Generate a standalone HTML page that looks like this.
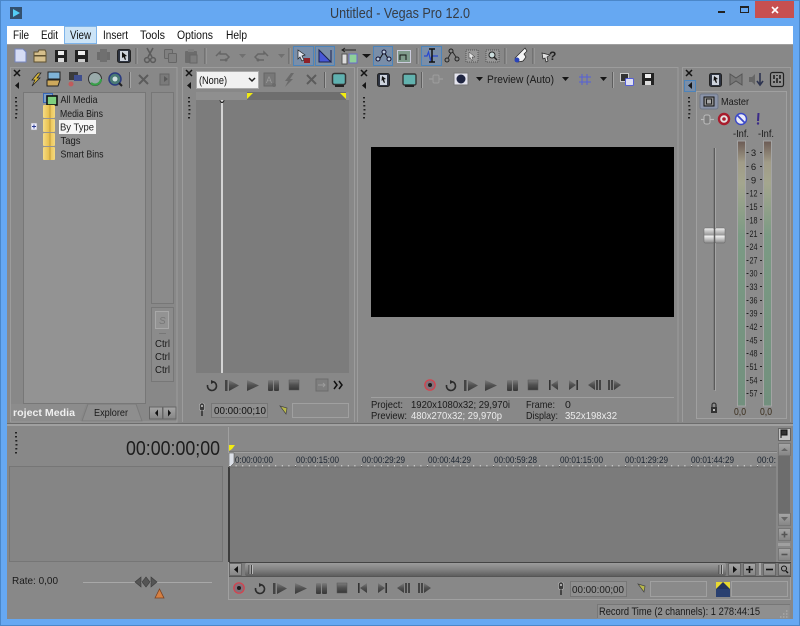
<!DOCTYPE html>
<html><head><meta charset="utf-8"><title>Untitled - Vegas Pro 12.0</title>
<style>
html,body{margin:0;padding:0;background:#66a8f2;width:800px;height:626px;overflow:hidden}
svg{display:block}
text{font-family:"Liberation Sans",sans-serif;font-size:10.5px;fill:#1a1a1a}
.m{font-size:11.5px;fill:#111}
.w{fill:#ececec}
.r{font-size:9.5px;fill:#1b2430}
.s{font-size:9.5px;fill:#1c1c1c;text-anchor:middle}
</style></head><body>
<svg width="800" height="626" viewBox="0 0 800 626" xmlns="http://www.w3.org/2000/svg">
<defs>
<linearGradient id="tb" x1="0" y1="0" x2="0" y2="1"><stop offset="0" stop-color="#7c7c7c"/><stop offset=".5" stop-color="#505050"/><stop offset="1" stop-color="#383838"/></linearGradient>
<linearGradient id="sb" x1="0" y1="0" x2="0" y2="1"><stop offset="0" stop-color="#9c9c9c"/><stop offset=".5" stop-color="#828282"/><stop offset="1" stop-color="#5e5e5e"/></linearGradient>
<linearGradient id="btn" x1="0" y1="0" x2="0" y2="1"><stop offset="0" stop-color="#a6a6a6"/><stop offset="1" stop-color="#858585"/></linearGradient>
<linearGradient id="meter" x1="0" y1="0" x2="0" y2="1"><stop offset="0" stop-color="#6b5a54"/><stop offset=".08" stop-color="#a19c88"/><stop offset=".16" stop-color="#a4a68e"/><stop offset=".36" stop-color="#7b9a84"/><stop offset="1" stop-color="#72907e"/></linearGradient>
<linearGradient id="fold" x1="0" y1="0" x2="1" y2="0"><stop offset="0" stop-color="#f6dc84"/><stop offset=".5" stop-color="#e9c04e"/><stop offset="1" stop-color="#f4d97e"/></linearGradient>
<linearGradient id="fad" x1="0" y1="0" x2="0" y2="1"><stop offset="0" stop-color="#f0f0f0"/><stop offset=".45" stop-color="#9a9a9a"/><stop offset=".55" stop-color="#eee"/><stop offset="1" stop-color="#888"/></linearGradient>
<g id="folder"><rect x="0" y="0" width="12" height="13" rx="1" fill="url(#fold)"/><path d="M7 0v13" stroke="#bf9a3c" stroke-width="1"/></g>
<g id="loop"><path d="M6 1.500A4.500 4.500 0 1 1 1.600 5" fill="none" stroke="#2c2c2c" stroke-width="1.600"/><path d="M5 0l4 2-4 2z" fill="#2c2c2c"/></g>
<g id="pfrom"><rect x="0" y="0" width="2.500" height="11" fill="#444"/><path d="M4 0l10 5.500L4 11z" fill="url(#tb)"/></g>
<g id="play"><path d="M0 0l12 5.500L0 11z" fill="url(#tb)"/></g>
<g id="pause"><rect x="0" y="0" width="5" height="11" rx="1" fill="url(#tb)"/><rect x="6" y="0" width="5" height="11" rx="1" fill="url(#tb)"/></g>
<g id="stop"><rect x="0" y="0" width="10" height="10" fill="url(#tb)" stroke="#555" stroke-width=".5"/></g>
<g id="prev"><rect x="0" y="0" width="1.600" height="10" fill="#333"/><path d="M9 0L2 5l7 5z" fill="url(#tb)"/></g>
<g id="next"><path d="M0 0l7 5-7 5z" fill="url(#tb)"/><rect x="7.400" y="0" width="1.600" height="10" fill="#333"/></g>
<g id="frb"><path d="M7 0L0 5l7 5z" fill="url(#tb)"/><rect x="8" y="0" width="2" height="10" fill="#444"/><rect x="11" y="0" width="2" height="10" fill="#444"/></g>
<g id="frf"><rect x="0" y="0" width="2" height="10" fill="#444"/><rect x="3" y="0" width="2" height="10" fill="#444"/><path d="M6 0l7 5-7 5z" fill="url(#tb)"/></g>
<g id="rec"><circle cx="6" cy="6" r="5.200" fill="#85707a" stroke="#d8404c" stroke-width="1.200"/><circle cx="6" cy="6" r="2" fill="#1c1c1c"/></g>
<g id="mic"><rect x="-2.500" y="0" width="5" height="8" rx="2.500" fill="#3c3c3c" stroke="#bbb" stroke-width=".6"/><circle cx="0" cy="3" r="1" fill="#ccc"/><path d="M0 8v5" stroke="#333" stroke-width="1.600"/></g>
<g id="grip"><path d="M1 0v1.500M1 4v1.500M1.300 8v1.500M1.500 12v1.500M1.300 16v1.500M1 20v1.500" stroke="#222" stroke-width="2"/></g>
<g id="xa"><path d="M-3 -3l6 6M3 -3l-6 6" stroke="#151515" stroke-width="1.500"/></g>
<g id="sep"><rect x="0" y="0" width="1" height="16" fill="#5e5e5e"/><rect x="1" y="0" width="1" height="16" fill="#a4a4a4"/></g>
</defs>

<!-- window frame -->
<rect x="0.500" y="0.500" width="799" height="625" fill="#66a8f2" stroke="#4b87c9"/>
<path d="M10 7h12v12H10z" fill="#33506e"/><path d="M13 9l7 4-7 4z" fill="#54cdf5"/>
<text x="400" y="18" text-anchor="middle" style="font-size:14.500px;fill:#373d44" textLength="140" lengthAdjust="spacingAndGlyphs">Untitled - Vegas Pro 12.0</text>
<rect x="755" y="1" width="39" height="17" fill="#c75050"/>
<rect x="718" y="11" width="7" height="2" fill="#222"/>
<rect x="740.500" y="7.500" width="8" height="5" fill="none" stroke="#222"/><rect x="740" y="6" width="9" height="2" fill="#222"/>
<path d="M772 7l6 6M778 7l-6 6" stroke="#fff" stroke-width="1.600"/>

<!-- client -->
<rect x="7" y="26" width="786" height="593" fill="#888"/>
<rect x="7" y="26" width="786" height="18" fill="#fff"/>
<rect x="64.500" y="26.500" width="32" height="17" fill="#cce4f7" stroke="#7eb4ea"/>
<text class="m" x="13" y="39" textLength="16" lengthAdjust="spacingAndGlyphs">File</text>
<text class="m" x="41" y="39" textLength="17" lengthAdjust="spacingAndGlyphs">Edit</text>
<text class="m" x="70" y="39" textLength="21" lengthAdjust="spacingAndGlyphs">View</text>
<text class="m" x="103" y="39" textLength="25" lengthAdjust="spacingAndGlyphs">Insert</text>
<text class="m" x="140" y="39" textLength="25" lengthAdjust="spacingAndGlyphs">Tools</text>
<text class="m" x="177" y="39" textLength="36" lengthAdjust="spacingAndGlyphs">Options</text>
<text class="m" x="226" y="39" textLength="21" lengthAdjust="spacingAndGlyphs">Help</text>
<rect x="7" y="44" width="786" height="1" fill="#a0a0a0"/>

<!-- main toolbar -->
<g>
<path d="M15 49h8l3 3v10H15z" fill="#d5dcf4" stroke="#7686c0"/>
<path d="M34 52h4l1-2h6l1 2v10H34z" fill="#d6bf8c" stroke="#5e5030"/><rect x="34" y="55" width="12" height="1.500" fill="#5e5030"/>
<path d="M55 50h12v12H55z" fill="#222"/><rect x="58" y="51" width="6" height="4" fill="#eee"/><rect x="58" y="58" width="6" height="4" fill="#ddd"/>
<path d="M75 50h13v12H75z" fill="#222"/><rect x="78" y="51" width="7" height="4" fill="#eee"/><rect x="78" y="59" width="7" height="3" fill="#ccc"/>
<path d="M97 52h13v8H97z" fill="#6c6c6c"/><path d="M100 49h7v13h-7z" fill="#707070"/>
<rect x="117.500" y="49.500" width="13" height="13" rx="2" fill="#2d3340" stroke="#222"/><rect x="120" y="51" width="8" height="10" fill="#cdd3dd"/><path d="M122 52l5 4-2 .5 1 3-1 .5-1.500-3-1.500 1z" fill="#111"/>
<use href="#sep" x="135.500" y="48"/>
<path d="M147 48l5 9M153 48l-5 9" stroke="#5c5c5c" stroke-width="1.600"/><circle cx="147" cy="60" r="2.400" fill="none" stroke="#5c5c5c" stroke-width="1.500"/><circle cx="153" cy="60" r="2.400" fill="none" stroke="#5c5c5c" stroke-width="1.500"/>
<rect x="164.500" y="49.500" width="8" height="9" rx="1" fill="#808080" stroke="#666"/><rect x="168.500" y="53.500" width="8" height="9" rx="1" fill="#808080" stroke="#666"/>
<rect x="185" y="51" width="12" height="12" rx="1" fill="#6c6c6c"/><rect x="188" y="49" width="6" height="3" fill="#808080"/><rect x="190" y="55" width="7" height="8" fill="#7d7d7d" stroke="#666"/>
<use href="#sep" x="204.500" y="48"/>
<path d="M216 56l4-4v2h6l3 3-3 3h-6" fill="none" stroke="#666" stroke-width="1.500"/><circle cx="226" cy="60" r="1.500" fill="#666"/>
<path d="M239 54h7l-3.500 4z" fill="#707070"/>
<path d="M268 56l-4-4v2h-6l-3 3 3 3h6" fill="none" stroke="#666" stroke-width="1.500"/><circle cx="258" cy="60" r="1.500" fill="#666"/>
<path d="M278 54h7l-3.500 4z" fill="#707070"/>
<use href="#sep" x="288.500" y="48"/>
<rect x="293.500" y="46.500" width="20" height="19" fill="#7a8ea8" stroke="#4c84bb"/>
<rect x="315.500" y="46.500" width="19" height="19" fill="#7a8ea8" stroke="#4c84bb"/>
<path d="M298 50l7 5-3 1 2 4-2 1-2-4-2 2z" fill="#dfe4ef" stroke="#222" stroke-width=".7"/><rect x="304" y="58" width="6" height="5" fill="#8e2028"/>
<path d="M319 62V50l12 12zM331 50v12" fill="#4858d8" stroke="#1a2350" stroke-width="1"/>
<rect x="342" y="54" width="5" height="10" fill="#ddd" stroke="#555"/><rect x="349" y="54" width="8" height="9" fill="#8ed09a" stroke="#6a6ac8"/><path d="M342 50h14M345 48l-3 2 3 2" stroke="#222" fill="none"/>
<path d="M362 54h9l-4.500 4z" fill="#151515"/>
<rect x="373.500" y="46.500" width="19" height="19" fill="#7a8ea8" stroke="#4c84bb"/>
<path d="M379 60l5-8 5 8" fill="none" stroke="#111" stroke-width="1"/><circle cx="384" cy="52" r="2" fill="#bcd" stroke="#113"/><circle cx="378" cy="59" r="2" fill="#bcd" stroke="#113"/><circle cx="389" cy="59" r="2" fill="#bcd" stroke="#113"/>
<rect x="397.500" y="50.500" width="13" height="12" fill="#7f9a8b" stroke="#ccd"/><path d="M400 60v-5h6v5" stroke="#111" fill="none"/>
<use href="#sep" x="416.500" y="48"/>
<rect x="421.500" y="46.500" width="20" height="19" fill="#7a8ea8" stroke="#4c84bb"/>
<path d="M424 56h3l1.500-4 2 8 1.500-4h6" stroke="#2848d0" fill="none" stroke-width="1.200"/><path d="M429 49h6M429 62h6M432 49v13" stroke="#111" stroke-width="1.500"/>
<path d="M447 60l5-9 6 9" fill="none" stroke="#2a2a2a"/><circle cx="447" cy="60" r="2" fill="#888" stroke="#222"/><circle cx="451" cy="51" r="2" fill="#888" stroke="#222"/><circle cx="457" cy="59" r="2" fill="#888" stroke="#222"/>
<rect x="466" y="50" width="12" height="12" fill="#999" stroke="#555" stroke-dasharray="1 1"/><path d="M469 52l6 5-3 0 1 3-1 .5-2-3-1 1z" fill="#e4e4e4" stroke="#333" stroke-width=".5"/>
<rect x="486" y="50" width="13" height="12" fill="#999" stroke="#555" stroke-dasharray="1 1"/><circle cx="492" cy="55" r="3" fill="#cdd" stroke="#222"/><path d="M494 57l3 3" stroke="#222" stroke-width="1.500"/>
<use href="#sep" x="504.500" y="48"/>
<path d="M518 62l-3-4 4-4 6-6 2 3-3 3 2 3-3 4z" fill="#f4f4f4" stroke="#222" stroke-width=".7"/><circle cx="517" cy="60" r="2.500" fill="#2a44b8"/>
<use href="#sep" x="532.500" y="48"/>
<path d="M542 53l8 2-3 2 1 4-2 1-1-4-2 1z" fill="#e0e0e0" stroke="#222" stroke-width=".7"/>
<text x="549" y="60" style="font-size:12px;font-weight:bold;fill:#222">?</text>
</g>

<!-- panel frames -->
<path d="M10.500 422V67.500H177V422H10.500M182.500 422V67.500H354.500V422M357.500 422V67.500H678V422M682.500 422V67.500H790.500V422" fill="none" stroke="#9c9c9c"/>
<rect x="7" y="423" width="786" height="1" fill="#6c6c6c"/><rect x="7" y="424" width="786" height="2" fill="#a0a0a0"/>

<!-- panel 1 -->
<use href="#xa" x="17" y="73"/><path d="M19 82v7l-4-3.500z" fill="#151515"/><use href="#grip" x="15" y="97"/>
<path d="M38 73l-6 7h3l-3 6 8-8h-3l4-5z" fill="#d8b83c" stroke="#222" stroke-width=".7"/>
<rect x="48" y="72" width="12" height="7" fill="#7fb3d8" stroke="#222"/><path d="M47 80h13l-2 6H47z" fill="#cda95c" stroke="#222"/>
<rect x="69" y="72" width="9" height="8" fill="#3b3b3b"/><rect x="74" y="75" width="8" height="6" fill="#3f4e8e"/><circle cx="71" cy="84" r="2.500" fill="#c05c5c"/>
<circle cx="95" cy="79" r="6.500" fill="#9aa" stroke="#333"/><path d="M91 83a6 6 0 0 0 10-4" fill="none" stroke="#3aa04a" stroke-width="2.200"/>
<circle cx="115" cy="79" r="6" fill="#4a7a74" stroke="#2a3a80" stroke-width="1.500"/><circle cx="115" cy="79" r="2.500" fill="#cfe0e0"/><path d="M119 83l3 3" stroke="#222" stroke-width="2"/>
<use href="#sep" x="129" y="72"/>
<path d="M139 75l9 9M148 75l-9 9" stroke="#5c5c5c" stroke-width="2"/>
<rect x="160" y="74" width="9" height="11" fill="#7a7a7a" stroke="#666"/><path d="M164 76l4 3-4 3z" fill="#5a5a5a"/>

<rect x="23.500" y="92.500" width="122" height="311" fill="#939393" stroke="#777"/>
<rect x="151.500" y="92.500" width="22" height="211" fill="#8b8b8b" stroke="#777"/>
<rect x="151.500" y="307.500" width="22" height="74" fill="#8b8b8b" stroke="#777"/><rect x="155.500" y="311.500" width="13" height="17" fill="#939393" stroke="#a8a8a8"/>
<text x="159" y="324" style="font-size:10px;font-style:italic;fill:#777">S</text>
<rect x="159" y="333" width="7" height="1" fill="#777"/>
<text x="155" y="347" textLength="15" lengthAdjust="spacingAndGlyphs">Ctrl</text><text x="155" y="360" textLength="15" lengthAdjust="spacingAndGlyphs">Ctrl</text><text x="155" y="373" textLength="15" lengthAdjust="spacingAndGlyphs">Ctrl</text>
<rect x="43.500" y="93.500" width="9" height="9" fill="#7da0c8" stroke="#3a68b8"/><rect x="47" y="96" width="10" height="9" fill="#7fd07f" stroke="#111" stroke-width="1.600"/>
<use href="#folder" x="43" y="105"/><use href="#folder" x="43" y="119"/><use href="#folder" x="43" y="133"/><use href="#folder" x="43" y="147"/>
<rect x="59" y="120" width="37" height="14" fill="#f6f6f6"/>
<text x="60.500" y="103" textLength="37" lengthAdjust="spacingAndGlyphs">All Media</text>
<text x="60" y="117" textLength="43" lengthAdjust="spacingAndGlyphs">Media Bins</text>
<text x="60" y="130.500" textLength="34" lengthAdjust="spacingAndGlyphs">By Type</text>
<text x="60.500" y="144" textLength="20" lengthAdjust="spacingAndGlyphs">Tags</text>
<text x="60.500" y="157.500" textLength="43" lengthAdjust="spacingAndGlyphs">Smart Bins</text>
<rect x="31" y="123" width="6" height="7" fill="#eef" stroke="#999" stroke-width=".6"/><path d="M32 126.500h4M34 124.500v4" stroke="#2a3a90"/>
<!-- tabs -->
<path d="M11 404h75l-6 17H11z" fill="#8c8c8c"/>
<text x="13" y="416" style="font-weight:bold;fill:#efefef" textLength="62" lengthAdjust="spacingAndGlyphs">roject Media</text>
<path d="M82 421l6-17h48l6 17z" fill="#8e8e8e" stroke="#7a7a7a"/>
<text x="94" y="416" textLength="34" lengthAdjust="spacingAndGlyphs">Explorer</text>
<rect x="149.500" y="407" width="13" height="12" fill="url(#btn)" stroke="#666"/><rect x="163" y="407" width="13" height="12" fill="url(#btn)" stroke="#666"/>
<path d="M158 409.500v7l-3-3.500zM168 409.500v7l3-3.500z" fill="#111"/>

<!-- panel 2 trimmer -->
<use href="#xa" x="189" y="73"/><path d="M191 82v7l-4-3.500z" fill="#151515"/><use href="#grip" x="188" y="97"/>
<rect x="196.500" y="71.500" width="62" height="17" fill="#f1f1f1" stroke="#aaa"/>
<text x="199" y="84" style="font-size:11px;fill:#111" textLength="28" lengthAdjust="spacingAndGlyphs">(None)</text>
<path d="M249 78l3 3 3-3" fill="none" stroke="#222" stroke-width="1.500"/>
<rect x="264" y="73" width="11" height="13" fill="#777" stroke="#666"/><text x="266" y="83" style="font-size:9px;fill:#999">A</text><circle cx="274" cy="85" r="2" fill="#6b6b6b"/>
<path d="M291 73l-6 8h3l-3 6 8-8h-3l4-6z" fill="#6a6a6a"/>
<path d="M307 75l9 9M316 75l-9 9" stroke="#5c5c5c" stroke-width="2"/>
<use href="#sep" x="324" y="72"/>
<rect x="332.500" y="73.500" width="13" height="11" rx="2" fill="#5fb1b0" stroke="#333" stroke-width="1.500"/><rect x="335" y="85" width="9" height="2" fill="#222"/>
<rect x="196" y="92" width="153" height="8" fill="#8f8f8f"/><rect x="247" y="92" width="99" height="8" fill="#6e6e6e"/>
<path d="M247 93h6l-3 3-3 3z" fill="#f2ec10"/><path d="M340 93h6v6l-3-3z" fill="#f2ec10"/>
<rect x="196" y="100" width="153" height="273" fill="#7c7c7c"/>
<rect x="221" y="100" width="2" height="273" fill="#d4d4d4"/><path d="M219 100l3 2 3-2-2 3h-2z" fill="#222"/>
<use href="#loop" x="206" y="380"/><use href="#pfrom" x="225" y="380"/><use href="#play" x="247" y="380"/><use href="#pause" x="268" y="380"/><use href="#stop" x="289" y="380"/>
<rect x="316" y="379" width="12" height="12" fill="#7e7e7e" stroke="#6c6c6c"/><path d="M318 385h7M323 383l2 2-2 2" stroke="#9c9c9c" fill="none"/>
<path d="M334 381l3 4-3 4M339 381l3 4-3 4" fill="none" stroke="#111" stroke-width="1.500"/>
<use href="#mic" x="202" y="403"/>
<rect x="211.500" y="403.500" width="56" height="14" fill="#8f8f8f" stroke="#777"/>
<text x="214" y="414" textLength="52" lengthAdjust="spacingAndGlyphs" style="fill:#111">00:00:00;10</text>
<path d="M280 406l7 2-1 6z" fill="#b9b94a" stroke="#444" stroke-width=".7"/>
<rect x="292.500" y="403.500" width="56" height="14" fill="#8a8a8a" stroke="#a0a0a0"/>

<!-- panel 3 preview -->
<use href="#xa" x="364" y="73"/><path d="M366 82v7l-4-3.500z" fill="#151515"/><use href="#grip" x="363" y="97"/>
<rect x="377.500" y="73.500" width="12" height="13" rx="2" fill="#2d3340" stroke="#222"/><rect x="380" y="75" width="7" height="10" fill="#cdd3dd"/><path d="M382 76l4 3-2 .5 1 3-1 .5-1.500-3-1 1z" fill="#111"/>
<rect x="403" y="74" width="13" height="11" rx="1.500" fill="#62b2ae" stroke="#333" stroke-width="1.400"/><rect x="405" y="85" width="9" height="2" fill="#222"/>
<use href="#sep" x="421" y="72"/>
<path d="M429 79h14" stroke="#9a9a9a" stroke-width="1.500"/><rect x="433" y="75" width="6" height="8" rx="1.500" fill="#8a8a8a" stroke="#9d9d9d"/>
<rect x="454" y="73" width="14" height="12" fill="#e4e4ee" stroke="#777"/><circle cx="461" cy="79" r="4.500" fill="#1e2440"/>
<path d="M476 77h7l-3.500 4z" fill="#151515"/>
<text x="487" y="83" style="font-size:11px" textLength="67" lengthAdjust="spacingAndGlyphs">Preview (Auto)</text>
<path d="M562 77h7l-3.500 4z" fill="#151515"/>
<path d="M582 74v11M587 74v11M579 77h12M579 82h12" stroke="#5560d8" stroke-width="1"/>
<path d="M600 77h7l-3.500 4z" fill="#151515"/>
<use href="#sep" x="612" y="72"/>
<rect x="620.500" y="73.500" width="8" height="8" fill="#333" stroke="#ccc"/><rect x="625.500" y="78.500" width="8" height="7" rx="1" fill="#dfe0f4" stroke="#5560d8"/>
<rect x="642" y="73" width="12" height="12" fill="#222"/><rect x="645" y="74" width="6" height="4" fill="#eee"/><rect x="645" y="81" width="6" height="4" fill="#ddd"/>
<rect x="371" y="147" width="303" height="170" fill="#000"/>
<use href="#rec" x="424" y="379"/><use href="#loop" x="445" y="380"/><use href="#pfrom" x="464" y="380"/><use href="#play" x="485" y="380"/><use href="#pause" x="507" y="380"/><use href="#stop" x="528" y="380"/><use href="#prev" x="549" y="380"/><use href="#next" x="569" y="380"/><use href="#frb" x="588" y="380"/><use href="#frf" x="608" y="380"/>
<rect x="371" y="397" width="303" height="1" fill="#a0a0a0"/>
<text x="371" y="408" textLength="32" lengthAdjust="spacingAndGlyphs">Project:</text>
<text x="411" y="408" textLength="99" lengthAdjust="spacingAndGlyphs">1920x1080x32; 29,970i</text>
<text x="526" y="408" textLength="29" lengthAdjust="spacingAndGlyphs">Frame:</text>
<text x="565" y="408">0</text>
<text x="371" y="419" textLength="36" lengthAdjust="spacingAndGlyphs">Preview:</text>
<text class="w" x="411" y="419" textLength="91" lengthAdjust="spacingAndGlyphs">480x270x32; 29,970p</text>
<text x="526" y="419" textLength="32" lengthAdjust="spacingAndGlyphs">Display:</text>
<text class="w" x="565" y="419" textLength="52" lengthAdjust="spacingAndGlyphs">352x198x32</text>

<!-- panel 4 mixer -->
<use href="#xa" x="689" y="73"/><rect x="684.500" y="80.500" width="11" height="11" fill="#7a8ea8" stroke="#4c84bb"/><path d="M692 82v7l-4-3.500z" fill="#151515"/><use href="#grip" x="688" y="97"/>
<rect x="709.500" y="73.500" width="12" height="13" rx="2" fill="#2d3340" stroke="#222"/><rect x="712" y="75" width="7" height="10" fill="#cdd3dd"/><path d="M714 76l4 3-2 .5 1 3-1 .5-1.500-3-1 1z" fill="#111"/>
<path d="M730 74l6 4 6-4v11l-6-4-6 4z" fill="#777" stroke="#555"/>
<path d="M749 77h3l3-3v11l-3-3h-3z" fill="#666"/><path d="M760 73v11M757 81l3 4 3-4" stroke="#2d3450" stroke-width="1.600" fill="none"/>
<rect x="770.500" y="72.500" width="13" height="14" rx="2" fill="#8f8f8f" stroke="#222" stroke-width="1.200"/><path d="M774 75v8M777 75v8M780 75v8" stroke="#111" stroke-width="1.400"/><path d="M773 80h2M776 77h2M779 80h2" stroke="#eee"/>
<rect x="696.500" y="91.500" width="90" height="327" fill="#8c8c8c" stroke="#a0a0a0"/>
<rect x="700" y="94" width="18" height="15" rx="2" fill="#8a93a8" stroke="#6f7788"/><rect x="704" y="97" width="10" height="9" fill="#8f8f8f" stroke="#111"/><rect x="706.500" y="99" width="5" height="5" fill="#a8a8a8" stroke="#222"/>
<text x="721" y="105" textLength="28" lengthAdjust="spacingAndGlyphs">Master</text>
<path d="M701 119.500h13" stroke="#bbb" stroke-width="1.200"/><rect x="704" y="115" width="6" height="9" rx="2" fill="#7f7f7f" stroke="#bbb"/>
<circle cx="724" cy="119" r="5" fill="#e4e4e4" stroke="#a81c2c" stroke-width="2.400"/><circle cx="724" cy="119" r="1.800" fill="#a81c2c"/>
<circle cx="741" cy="119" r="5.500" fill="#ececf8" stroke="#3a48c8" stroke-width="1.400"/><path d="M737 115l8 8" stroke="#3a48c8" stroke-width="1.800"/>
<path d="M758.500 113l-.5 8" stroke="#3a2a88" stroke-width="2"/><circle cx="758" cy="123.500" r="1.200" fill="#3a2a88"/>
<text x="733" y="137" textLength="16" lengthAdjust="spacingAndGlyphs">-Inf.</text><text x="758" y="137" textLength="16" lengthAdjust="spacingAndGlyphs">-Inf.</text>
<path d="M714.500 148V390" stroke="#5b5b5b" stroke-width="1.600"/><path d="M715.500 148V391" stroke="#a4a4a4"/>
<rect x="704" y="228" width="10" height="15" rx="1" fill="url(#fad)" stroke="#666" stroke-width=".5"/><rect x="715" y="228" width="10" height="15" rx="1" fill="url(#fad)" stroke="#666" stroke-width=".5"/>
<rect x="711" y="407" width="6" height="6" fill="#333"/><path d="M712 407v-2a2 2 0 0 1 4 0v2" fill="none" stroke="#333" stroke-width="1.200"/><rect x="713" y="409" width="2" height="2" fill="#bbb"/>
<rect x="737.500" y="141" width="8" height="265" fill="url(#meter)" stroke="#a4a4a4" stroke-width="1"/>
<rect x="763.500" y="141" width="8" height="265" fill="url(#meter)" stroke="#a4a4a4" stroke-width="1"/>
<g>
<text class="s" x="753.500" y="156">3</text><text class="s" x="753.500" y="170">6</text><text class="s" x="753.500" y="183.500">9</text>
<text class="s" x="753.500" y="196.500" textLength="8" lengthAdjust="spacingAndGlyphs">12</text><text class="s" x="753.500" y="210" textLength="8" lengthAdjust="spacingAndGlyphs">15</text><text class="s" x="753.500" y="223.500" textLength="8" lengthAdjust="spacingAndGlyphs">18</text><text class="s" x="753.500" y="237" textLength="8" lengthAdjust="spacingAndGlyphs">21</text><text class="s" x="753.500" y="250" textLength="8" lengthAdjust="spacingAndGlyphs">24</text><text class="s" x="753.500" y="263.500" textLength="8" lengthAdjust="spacingAndGlyphs">27</text><text class="s" x="753.500" y="276.500" textLength="8" lengthAdjust="spacingAndGlyphs">30</text><text class="s" x="753.500" y="290" textLength="8" lengthAdjust="spacingAndGlyphs">33</text><text class="s" x="753.500" y="303.500" textLength="8" lengthAdjust="spacingAndGlyphs">36</text><text class="s" x="753.500" y="316.500" textLength="8" lengthAdjust="spacingAndGlyphs">39</text><text class="s" x="753.500" y="330" textLength="8" lengthAdjust="spacingAndGlyphs">42</text><text class="s" x="753.500" y="343.500" textLength="8" lengthAdjust="spacingAndGlyphs">45</text><text class="s" x="753.500" y="356.500" textLength="8" lengthAdjust="spacingAndGlyphs">48</text><text class="s" x="753.500" y="370" textLength="8" lengthAdjust="spacingAndGlyphs">51</text><text class="s" x="753.500" y="383.500" textLength="8" lengthAdjust="spacingAndGlyphs">54</text><text class="s" x="753.500" y="396.500" textLength="8" lengthAdjust="spacingAndGlyphs">57</text>
</g>
<path d="M746.500 152.500h2M746.500 166.500h2M746.500 179.500h2M746.500 193.500h2M746.500 206.500h2M746.500 219.500h2M746.500 233.500h2M746.500 246.500h2M746.500 260.500h2M746.500 273.500h2M746.500 286.500h2M746.500 300.500h2M746.500 313.500h2M746.500 326.500h2M746.500 340.500h2M746.500 353.500h2M746.500 366.500h2M746.500 380.500h2M746.500 393.500h2M760 152.500h2M760 166.500h2M760 179.500h2M760 193.500h2M760 206.500h2M760 219.500h2M760 233.500h2M760 246.500h2M760 260.500h2M760 273.500h2M760 286.500h2M760 300.500h2M760 313.500h2M760 326.500h2M760 340.500h2M760 353.500h2M760 366.500h2M760 380.500h2M760 393.500h2" stroke="#222"/>
<text x="734" y="415" style="fill:#3a2d1c" textLength="12" lengthAdjust="spacingAndGlyphs">0,0</text><text x="760" y="415" style="fill:#3a2d1c" textLength="12" lengthAdjust="spacingAndGlyphs">0,0</text>

<!-- timeline -->
<use href="#grip" x="15" y="432"/>
<text x="126" y="455" style="font-size:20px;fill:#1d1d1d" textLength="94" lengthAdjust="spacingAndGlyphs">00:00:00;00</text>
<rect x="9.500" y="466.500" width="213" height="95" fill="#858585" stroke="#767676"/>
<rect x="228" y="427" width="1" height="173" fill="#a0a0a0"/>
<rect x="229" y="451" width="548" height="1" fill="#777"/><rect x="229" y="452" width="548" height="1" fill="#a0a0a0"/>
<path d="M229 445h6l-3 4-3 2z" fill="#f2ec10"/>
<rect x="229" y="453" width="548" height="14" fill="#8b8b8b"/>
<rect x="229" y="467" width="547" height="95" fill="#7b7b7b"/>
<rect x="228" y="467" width="2" height="95" fill="#3c3c3c"/>
<path d="M229 453h5v10l-4 4h-1z" fill="#dce0e8" stroke="#444" stroke-width=".5"/>
<g>
<text class="r" x="235" y="463" textLength="38" lengthAdjust="spacingAndGlyphs">0:00:00:00</text>
<text class="r" x="296" y="463" textLength="43" lengthAdjust="spacingAndGlyphs">00:00:15:00</text>
<text class="r" x="362" y="463" textLength="43" lengthAdjust="spacingAndGlyphs">00:00:29:29</text>
<text class="r" x="428" y="463" textLength="43" lengthAdjust="spacingAndGlyphs">00:00:44:29</text>
<text class="r" x="494" y="463" textLength="43" lengthAdjust="spacingAndGlyphs">00:00:59:28</text>
<text class="r" x="560" y="463" textLength="43" lengthAdjust="spacingAndGlyphs">00:01:15:00</text>
<text class="r" x="625" y="463" textLength="43" lengthAdjust="spacingAndGlyphs">00:01:29:29</text>
<text class="r" x="691" y="463" textLength="43" lengthAdjust="spacingAndGlyphs">00:01:44:29</text>
<text class="r" x="757" y="463" textLength="19" lengthAdjust="spacingAndGlyphs">00:0:</text>
</g>
<line x1="229" y1="466" x2="776" y2="466" stroke="#d4d4d4" stroke-width="2" stroke-dasharray="1 5.600"/>
<line x1="229" y1="466.500" x2="776" y2="466.500" stroke="#444" stroke-width="1" stroke-dasharray="1 65"/>
<path d="M229 467h547" stroke="#6e6e6e"/>
<!-- vscroll -->
<rect x="777" y="427" width="14" height="135" fill="#888"/>
<rect x="778" y="455" width="12" height="58" fill="#6d6d6d"/>
<rect x="778.500" y="428.500" width="12" height="12" fill="#c4c4c4" stroke="#666"/><path d="M781 438v-8h6v5h-5" fill="#333" stroke="#111"/>
<rect x="778.500" y="443.500" width="12" height="12" fill="url(#btn)" stroke="#777"/><path d="M781 451h7l-3.500-3z" fill="#666"/>
<rect x="778.500" y="513.500" width="12" height="12" fill="url(#btn)" stroke="#777"/><path d="M781 517h7l-3.500 4z" fill="#666"/>
<rect x="778.500" y="528.500" width="12" height="12" fill="url(#btn)" stroke="#777"/><path d="M781.500 534.500h6M784.500 531.500v6" stroke="#555" stroke-width="1.600"/>
<rect x="778" y="543" width="12" height="3" fill="#a0a0a0"/>
<rect x="778.500" y="548.500" width="12" height="12" fill="url(#btn)" stroke="#777"/><path d="M781.500 554.500h6" stroke="#555" stroke-width="1.600"/>
<!-- hscroll -->
<rect x="229" y="562" width="562" height="14" fill="#7c7c7c"/>
<rect x="229" y="562" width="562" height="1" fill="#444"/><rect x="229" y="576" width="562" height="1" fill="#555"/>
<rect x="229.500" y="563.500" width="12" height="12" fill="url(#btn)" stroke="#666"/><path d="M238 566v7l-4-3.500z" fill="#111"/>
<rect x="245" y="563" width="481" height="13" rx="2" fill="url(#sb)"/>
<path d="M249 565v9M251.500 565v9" stroke="#444"/><path d="M250 565v9M252.500 565v9" stroke="#bbb"/>
<path d="M719 565v9M721.500 565v9" stroke="#444"/><path d="M720 565v9M722.500 565v9" stroke="#bbb"/>
<rect x="728.500" y="563.500" width="12" height="12" fill="url(#btn)" stroke="#666"/><path d="M733 566v7l4-3.500z" fill="#111"/>
<rect x="743.500" y="563.500" width="12" height="12" fill="url(#btn)" stroke="#666"/><path d="M746 569.500h7M749.500 566v7" stroke="#111" stroke-width="1.600"/>
<rect x="759" y="563" width="2" height="12" fill="#a6a6a6"/>
<rect x="763.500" y="563.500" width="12" height="12" fill="url(#btn)" stroke="#666"/><path d="M766 569.500h7" stroke="#111" stroke-width="1.600"/>
<rect x="778.500" y="563.500" width="12" height="12" fill="url(#btn)" stroke="#666"/><circle cx="784" cy="568.500" r="2.500" fill="none" stroke="#111"/><path d="M786 571l2 2" stroke="#111" stroke-width="1.400"/>
<!-- transport -->
<path d="M228.500 577v22.500H790.500V577" fill="none" stroke="#a0a0a0"/>
<use href="#rec" x="233" y="582"/><use href="#loop" x="254" y="583"/><use href="#pfrom" x="273" y="583"/><use href="#play" x="295" y="583"/><use href="#pause" x="316" y="583"/><use href="#stop" x="337" y="583"/><use href="#prev" x="358" y="583"/><use href="#next" x="378" y="583"/><use href="#frb" x="397" y="583"/><use href="#frf" x="418" y="583"/>
<use href="#mic" x="561" y="582"/>
<rect x="570.500" y="581.500" width="56" height="15" fill="#8f8f8f" stroke="#777"/>
<text x="572" y="593" textLength="52" lengthAdjust="spacingAndGlyphs" style="fill:#1d1d1d">00:00:00;00</text>
<path d="M638 584l7 2-1 6z" fill="#b9b94a" stroke="#444" stroke-width=".7"/>
<rect x="650.500" y="581.500" width="56" height="15" fill="#8a8a8a" stroke="#a0a0a0"/>
<rect x="716" y="582" width="14" height="15" fill="#e8d830"/><rect x="716" y="589" width="14" height="8" fill="#2a4070"/><path d="M716 589l7-7 7 7z" fill="#24345c"/>
<rect x="731.500" y="581.500" width="56" height="15" fill="#8a8a8a" stroke="#a0a0a0"/>
<!-- rate -->
<text x="12" y="584" textLength="46" lengthAdjust="spacingAndGlyphs">Rate: 0,00</text>
<path d="M83 582.500h129" stroke="#a8a8a8"/>
<path d="M135 582l6-5v10zM142 582l4-5 4 5-4 5zM151 577l6 5-6 5z" fill="#555" stroke="#3a3a3a" stroke-width=".6"/>
<path d="M155 598l4.500-9 4.500 9z" fill="#d58043" stroke="#7a4020" stroke-width=".8"/>
<!-- status -->
<rect x="597.500" y="604.500" width="192" height="14" fill="#8f8f8f"/>
<path d="M597.500 618V604.500H790" fill="none" stroke="#777"/>
<text x="599" y="615" style="font-size:11px" textLength="161" lengthAdjust="spacingAndGlyphs">Record Time (2 channels): 1 278:44:15</text>
<path d="M780 617h9M783 614h6M786 611h3" stroke="#a8a8a8" stroke-width="1.500" stroke-dasharray="1.500 1.500"/>
</svg>
</body></html>
